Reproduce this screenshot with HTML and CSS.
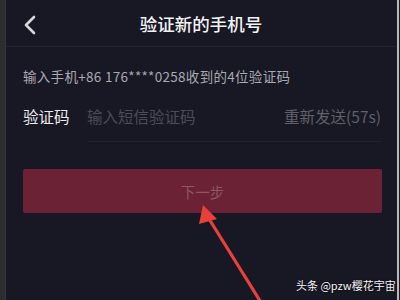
FILE: index.html
```html
<!DOCTYPE html>
<html lang="zh-CN">
<head>
<meta charset="utf-8">
<link rel="stylesheet" href="styles.css">
</head>
<body>
<div class="frame">
  <div class="edge-left"></div>
  <div class="screen">
    <header class="topbar">
      <svg class="back" width="14" height="20" viewBox="0 0 14 20"><path d="M11 2 L3 10 L11 18" fill="none" stroke="#d8d8dc" stroke-width="2.6" stroke-linecap="round" stroke-linejoin="round"/></svg>
      <h1 class="title">验证新的手机号</h1>
    </header>
    <p class="hint">输入手机+86 176****0258收到的4位验证码</p>
    <div class="code-row">
      <span class="label">验证码</span>
      <div class="field">
        <span class="placeholder">输入短信验证码</span>
        <span class="resend">重新发送(57s)</span>
      </div>
    </div>
    <div class="btn">下一步</div>
  </div>
  <div class="edge-right"><div class="edge-line"></div></div>
</div>
<svg class="arrow" width="400" height="300" viewBox="0 0 400 300">
  <line x1="206" y1="214" x2="262" y2="304" stroke="#e8403a" stroke-width="3.2"/>
  <polygon points="203,205 217,219 199,224" fill="#e8403a"/>
</svg>
<div class="watermark">头条 @pzw樱花宇宙</div>
</body>
</html>
```
FILE: styles.css
```css
html, body {
  margin: 0;
  padding: 0;
  width: 400px;
  height: 300px;
  overflow: hidden;
  background: #181824;
  font-family: "Noto Sans CJK SC", "Noto Sans", sans-serif;
}
.frame {
  display: flex;
  width: 400px;
  height: 300px;
}
.edge-left {
  width: 6px;
  background: #2b2e2e;
  border-right: 1px solid #343838;
  box-sizing: border-box;
}
.screen {
  flex: 1;
  display: flex;
  flex-direction: column;
}
.edge-right {
  width: 4px;
  display: flex;
  background: #1a1a20;
}
.edge-line {
  margin-left: 1px;
  width: 2px;
  background: #b8b8bc;
}
.topbar {
  height: 47px;
  border-bottom: 1px solid #25252f;
  display: flex;
  align-items: center;
  justify-content: center;
  position: relative;
  box-sizing: border-box;
}
.back {
  position: absolute;
  left: 17px;
  top: 15px;
}
.title {
  margin: 0;
  font-size: 17.5px;
  font-weight: 500;
  color: #f2f2f4;
}
.hint {
  margin: 20px 0 0 17px;
  font-size: 13.5px;
  letter-spacing: 0.3px;
  line-height: 18px;
  color: #a8a8b0;
}
.code-row {
  display: flex;
  align-items: stretch;
  margin: 10px 14px 0 17px;
}
.label {
  font-size: 15.5px;
  color: #ececef;
  line-height: 22px;
  padding: 10px 0 15px;
  width: 64px;
}
.field {
  flex: 1;
  display: flex;
  justify-content: space-between;
  align-items: center;
  padding-bottom: 5px;
  border-bottom: 1px solid #23232e;
}
.placeholder {
  font-size: 15.5px;
  color: #4c4c57;
}
.resend {
  font-size: 15.5px;
  color: #60606a;
  margin-right: 1px;
}
.btn {
  margin: 27px 14px 0 17px;
  height: 44px;
  background: #6a2234;
  border-radius: 2px;
  display: flex;
  align-items: center;
  justify-content: center;
  font-size: 14.5px;
  color: #8e5666;
}
.arrow {
  position: absolute;
  left: 0;
  top: 0;
}
.watermark {
  position: absolute;
  left: 296px;
  top: 278px;
  white-space: nowrap;
  font-size: 11px;
  line-height: 15px;
  color: #f4f4f4;
  text-shadow: 0 0 2px rgba(0,0,0,0.8);
}
```
